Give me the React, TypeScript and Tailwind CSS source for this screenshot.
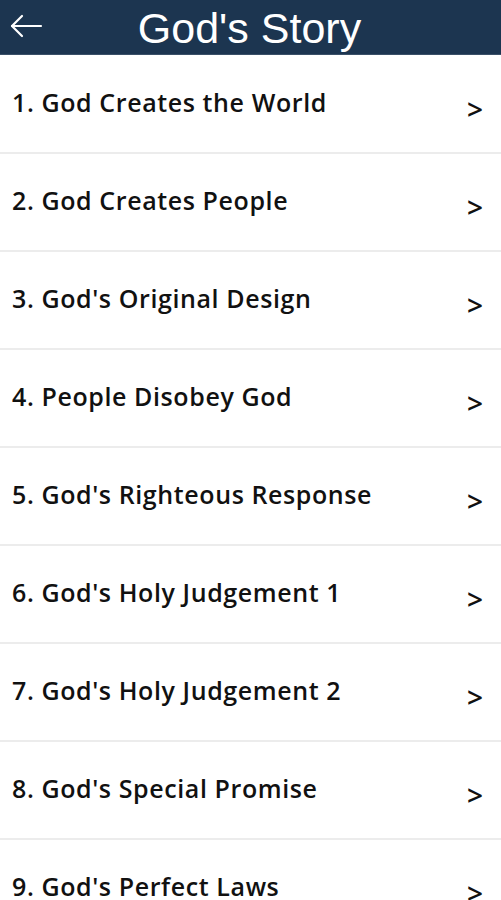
import React from "react";

const items = [
  "1. God Creates the World",
  "2. God Creates People",
  "3. God's Original Design",
  "4. People Disobey God",
  "5. God's Righteous Response",
  "6. God's Holy Judgement 1",
  "7. God's Holy Judgement 2",
  "8. God's Special Promise",
  "9. God's Perfect Laws",
];

export default function App() {
  return (
    <div className="w-[501px] h-[900px] overflow-hidden bg-white">
      <div className="h-[55px] bg-[#1c3550] flex items-center relative border-b border-[#3a5068]">
        <svg className="absolute left-[9px] top-[12px]" width="34" height="28" viewBox="0 0 34 28" fill="none" stroke="white" strokeWidth="2.2" strokeLinecap="round" strokeLinejoin="round">
          <path d="M32 14H3" />
          <path d="M13 4L3 14L13 24" />
        </svg>
        <div className="w-full text-center text-white text-[43px] leading-none pt-[2px] pr-[2px]" style={{ fontFamily: '"Liberation Sans", Arial, sans-serif' }}>
          God's Story
        </div>
      </div>
      <div className="pt-[1px]">
        {items.map((t) => (
          <div key={t} className="h-[98px] border-b-2 border-[#ececec] flex items-center justify-between pl-[12px] pr-[18px]">
            <span className="text-[25px] font-semibold tracking-[0.6px] text-[#111] pb-[2px]" style={{ fontFamily: '"Open Sans", sans-serif' }}>{t}</span>
            <span className="text-[28px] font-semibold text-[#111] pt-[10px]" style={{ fontFamily: '"Open Sans", sans-serif' }}>&gt;</span>
          </div>
        ))}
      </div>
    </div>
  );
}
